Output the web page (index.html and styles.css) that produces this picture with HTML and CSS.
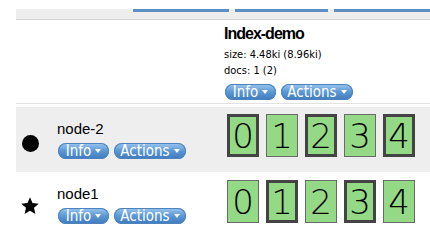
FILE: index.html
```html
<!DOCTYPE html>
<html lang="en">
<head>
  <meta charset="UTF-8">
  <title>Cluster Overview</title>
  <link rel="stylesheet" href="styles.css">
</head>
<body>

<!-- En-tête avec les barres -->
<div class="head">
  <div class="bars"><span></span><span></span><span></span></div>
</div>

<!-- Ligne de l'index -->
<div class="row index-row">
  <div class="name-cell"></div>
  <div class="data-cell">
    <div class="idx-title">Index-demo</div>
    <div class="idx-meta">size: 4.48ki (8.96ki)</div>
    <div class="idx-meta">docs: 1 (2)</div>
    <div class="btns">
      <span class="btn info">Info</span>
      <span class="btn actions">Actions</span>
    </div>
  </div>
</div>

<!-- Noeud 2 -->
<div class="row alt">
  <div class="name-cell">
    <div class="icon"><span class="dot"></span></div>
    <div class="node-info">
      <div class="node-name">node-2</div>
      <div class="btns">
        <span class="btn info">Info</span>
        <span class="btn actions">Actions</span>
      </div>
    </div>
  </div>
  <div class="data-cell">
    <div class="shards">
      <span class="shard primary">0</span>
      <span class="shard">1</span>
      <span class="shard primary">2</span>
      <span class="shard">3</span>
      <span class="shard primary">4</span>
    </div>
  </div>
</div>

<!-- Noeud 1 (master) -->
<div class="row">
  <div class="name-cell">
    <div class="icon">
      <svg class="star" width="18" height="18" viewBox="0 0 18 18">
        <polygon points="9,0.3 11.47,6.1 17.75,6.66 12.99,10.8 14.41,16.94 9,13.7 3.59,16.94 5.01,10.8 0.25,6.66 6.53,6.1" fill="#000"/>
      </svg>
    </div>
    <div class="node-info">
      <div class="node-name">node1</div>
      <div class="btns">
        <span class="btn info">Info</span>
        <span class="btn actions">Actions</span>
      </div>
    </div>
  </div>
  <div class="data-cell">
    <div class="shards second">
      <span class="shard">0</span>
      <span class="shard primary">1</span>
      <span class="shard">2</span>
      <span class="shard primary">3</span>
      <span class="shard">4</span>
    </div>
  </div>
</div>

</body>
</html>
```
FILE: styles.css
```css
body {
  margin: 0;
  font-family: "DejaVu Sans Condensed", "DejaVu Sans", sans-serif;
  color: #000;
  background-color: #fff;
}

/* En-tête */
.head {
  margin-left: 16px;
  height: 19px;
  border-bottom: 1px solid #d6d6d6;
  background: linear-gradient(#fff 0, #fff 9px, #eeeeee 9px);
}

.bars {
  display: flex;
  gap: 6px;
  padding-left: 117px;
  padding-top: 9px;
}

.bars span {
  height: 3px;
  width: 96px;
  background-color: #5e8fc2;
}

.bars span:nth-child(2) {
  width: 93px;
}

.bars span:last-child {
  flex: 1;
}

/* Lignes du tableau */
.row {
  display: flex;
  margin-left: 16px;
  height: 65px;
}

.row.alt {
  background-color: #eeeeee;
}

.index-row {
  height: 83px;
  border-bottom: 1px solid #e2e2e2;
  margin-bottom: 3px;
}

.name-cell {
  width: 204px;
  flex-shrink: 0;
  display: flex;
}

.data-cell {
  flex: 1;
}

.index-row .data-cell {
  padding: 5px 0 0 4px;
}

.idx-title {
  font-family: "Liberation Sans", sans-serif;
  font-weight: bold;
  font-size: 16px;
  letter-spacing: -1px;
  line-height: 18px;
}

.idx-meta {
  font-size: 11px;
  line-height: 16px;
}

.idx-title + .idx-meta {
  margin-top: 4px;
}

.index-row .btns {
  margin-top: 5px;
  margin-left: 1px;
}

/* Boutons */
.btns {
  display: flex;
  gap: 5px;
}

.btn {
  height: 16px;
  border-radius: 8px;
  background: linear-gradient(#9cc7ef, #5b97d4 50%, #3f7bbd);
  box-shadow: inset 0 0 0 1px #4d83bd;
  color: #fff;
  font-size: 15px;
  line-height: 16px;
  display: flex;
  align-items: center;
  justify-content: center;
}

.btn.info {
  width: 51px;
}

.btn.actions {
  width: 72px;
}

.btn::after {
  content: "";
  border-left: 3px solid transparent;
  border-right: 3px solid transparent;
  border-top: 4px solid #fff;
  margin-left: 4px;
}

/* Noeuds */
.icon {
  width: 20px;
  margin-left: 4px;
  display: flex;
  justify-content: center;
  align-items: flex-start;
}

.dot {
  width: 17px;
  height: 17px;
  border-radius: 50%;
  background-color: #000;
  margin-top: 28px;
}

.star {
  margin-top: 25px;
}

.node-info {
  margin-left: 17px;
  padding-top: 13px;
}

.node-name {
  font-family: "Liberation Sans", sans-serif;
  font-size: 15px;
  line-height: 17px;
}

.node-info .btns {
  margin-top: 6px;
  margin-left: 1px;
}

/* Shards */
.shards {
  display: flex;
  gap: 7px;
  padding: 7px 0 0 7px;
}

.shards.second {
  padding-top: 8px;
}

.shard {
  width: 32px;
  height: 43px;
  box-sizing: border-box;
  background-color: #94d985;
  border: 1px solid #6a6a6a;
  font-family: "DejaVu Sans", sans-serif;
  font-weight: 200;
  font-size: 34px;
  line-height: 1;
  display: flex;
  align-items: center;
  justify-content: center;
}

.shard.primary {
  border: 3px solid #444;
}
```
